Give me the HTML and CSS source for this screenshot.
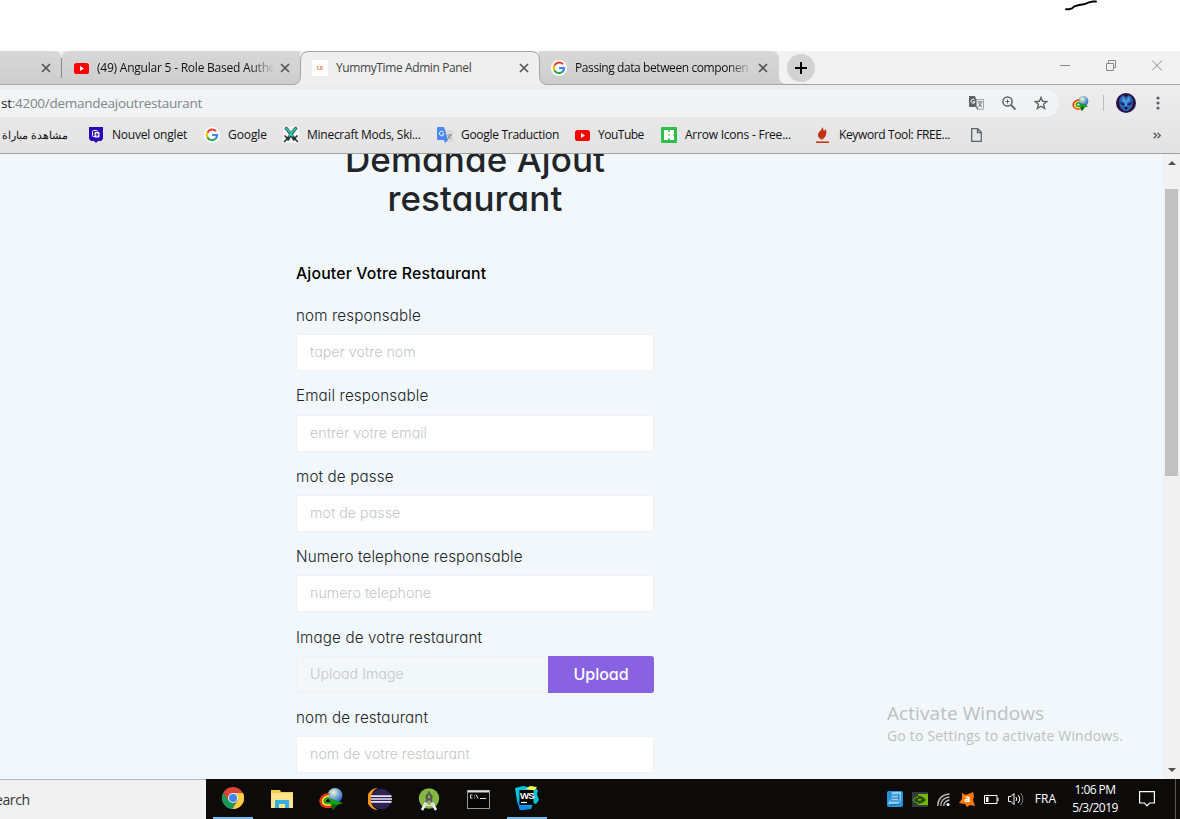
FILE: index.html
```html
<!DOCTYPE html>
<html lang="fr"><head><meta charset="utf-8"><title>YummyTime Admin Panel</title><link rel="stylesheet" href="styles.css"></head>
<body>
<svg width="0" height="0" class="defs"><defs>
<radialGradient id="gl" cx=".4" cy=".3" r=".75"><stop stop-color="#eef4c8"/><stop offset=".4" stop-color="#8fb8d8"/><stop offset="1" stop-color="#1d55b8"/></radialGradient>
<symbol id="x" viewBox="0 0 10 10"><path d="M1 1l8 8M9 1l-8 8" stroke="#555" stroke-width="1.7"/></symbol>
<symbol id="g" viewBox="0 0 16 16"><circle cx="8" cy="8" r="8" fill="#fff"/><g fill="none" stroke-width="2.2"><path d="M12 4.2A5.2 5.2 0 0 0 3.4 5.6" stroke="#ea4335"/><path d="M3.4 5.6a5.2 5.2 0 0 0 0 4.8" stroke="#fbbc05"/><path d="M3.4 10.4a5.2 5.2 0 0 0 8 1.4" stroke="#34a853"/><path d="M11.4 11.8A5 5 0 0 0 13.1 8H8" stroke="#4285f4"/></g></symbol>
<symbol id="yt" viewBox="0 0 15 11"><rect width="15" height="11" rx="2.6" fill="#f00"/><path d="M6 3v5l4-2.500z" fill="#fff"/></symbol>
<symbol id="idm" viewBox="0 0 24 22"><circle cx="16" cy="7.500" r="7.500" fill="url(#gl)"/><g fill="none" stroke-width="2.200"><path d="M10 6C4 6 .5 11 1.500 14.500S7 20 13 18.500" stroke="#e8301a"/><path d="M10 8C6 8 3 11.500 3.700 14S8 17.500 13 16.500" stroke="#ffd91f"/><path d="M10 10c-3 0-4.500 2-4 3.500s3 2 6 1" stroke="#25a33a"/></g><path d="M10 10l14 5-6 2-4 5-2-6-5-1.500 5-.5z" fill="#10a014"/><path d="M12 16l2 6 4-5z" fill="#0b5d10"/></symbol>
</defs></svg>
<header class="blank"><svg class="scribble" width="34" height="13"><path d="M2 9.200h3l3-.7 2-1.900L15 5l5-.7 5-2 4-.8h3" fill="none" stroke="#000" stroke-width="1.900" stroke-linecap="round"/></svg></header>
<nav class="tabs">
<svg class="tab-shapes" width="1180" height="34"><defs><linearGradient id="tg" x2="0" y2="1"><stop stop-color="#d8d8d8"/><stop offset="1" stop-color="#cdcdcd"/></linearGradient></defs>
<rect width="1180" height="34" fill="#f2f2f2"/>
<path d="M0 0H54q7 0 7.500 7Q62 0 69 0H300V34H0zM539 0H771q8 0 8 8V25q0 8 8 8v1H539z" fill="url(#tg)"/>
<path d="M61.500 7V27" stroke="#888"/><path d="M0 33.500H1180" stroke="#a4a4a4"/>
<path d="M292 34q8.500-.5 8.500-9V9q0-8.500 8.500-8.500H531q8.500 0 8.500 8.500V25q0 8.500 8.500 9z" fill="#efefef"/>
<path d="M292 33.500q8.500 0 8.500-8.500V9q0-8.500 8.500-8.500H531q8.500 0 8.500 8.500V25q0 8.500 8.500 8.500" fill="none" stroke="#a4a4a4"/></svg>
<div class="tab t1"><svg class="close"><use href="#x"/></svg></div>
<div class="tab t2"><svg width="15" height="11"><use href="#yt"/></svg><span class="title fade">(49) Angular 5 - Role Based Autho</span><svg class="close"><use href="#x"/></svg></div>
<div class="tab t3"><span class="fav">UI</span><span class="title act">YummyTime Admin Panel</span><svg class="close"><use href="#x"/></svg></div>
<div class="tab t4"><svg width="16" height="16"><use href="#g"/></svg><span class="title fade">Passing data between componen</span><svg class="close"><use href="#x"/></svg></div>
<div class="plus"><svg width="12" height="12"><path d="M6 0v12M0 6h12" stroke="#000" stroke-width="2"/></svg></div>
<div class="win"><svg width="102" height="11" fill="none" stroke="#888"><path d="M0 5.500H10M46.500 3.500h7v7h-7zM48.500 3V.5h7v7H54M92 .5l10 10M102 .5l-10 10"/></svg></div>
</nav>
<div class="chrome">
<div class="addr"><div class="omni"><span class="url"><b>st</b>:4200/demandeajoutrestaurant</span>
<div class="omni-ic">
<svg width="15" height="14"><path d="M0 0h6l1 3h7.500v10.500H8L7 11H1a1 1 0 0 1-1-1z" fill="#5f6368"/><path d="M7.500 3.500H14v9.500H9.500l-2-3z" fill="#e8eaec"/><path d="M5.500 3.800a2 2 0 1 0 .5 2H4" fill="none" stroke="#fff"/><path d="M8.500 6h5M11 5v1M9.500 11l3-4.500M9.500 7l3.500 4" fill="none" stroke="#777"/></svg>
<svg width="14" height="14" fill="none" stroke="#5f6368"><circle cx="5.500" cy="5.500" r="4.600" stroke-width="1.500"/><path d="M9 9l4.500 4.500" stroke-width="1.900"/><path d="M5.500 3.500v4M3.500 5.500h4"/></svg>
<svg width="14" height="14"><path d="M7 1.500l1.600 3.800 4.200.3-3.200 2.700 1 4.100L7 10.200l-3.600 2.200 1-4.100L1.200 5.600l4.200-.3z" fill="none" stroke="#5f6368" stroke-width="1.400"/></svg>
</div></div>
<svg class="idm" width="17" height="15"><use href="#idm"/></svg><i class="vsep"></i>
<svg class="avatar" width="20" height="20"><circle cx="10" cy="10" r="10" fill="#2a1040"/><path d="M6 2l4 2 4-2 3 5-1 7-4 4H8l-4-4-1-7z" fill="#2a62b4"/><path d="M7 3l3 5 3-5 1 5-3 2v3H9v-3L6 8z" fill="#4f9be0"/><path d="M4 9l5 2.500-3 .5zM16 9l-5 2.500 3 .5zM8 15l2-1 2 1-2 1.500z" fill="#100c38"/></svg>
<svg class="dots" width="4" height="14" fill="#5f6368"><circle cx="2" cy="2" r="1.600"/><circle cx="2" cy="7" r="1.600"/><circle cx="2" cy="12" r="1.600"/></svg></div>
<div class="marks">
<span class="bm b0"><span dir="rtl">مشاهدة مباراة</span></span>
<span class="bm b1"><svg width="14" height="16"><path d="M0 0h14v12l-2 2H9l-2 2-2-2H2l-2-2z" fill="#2a0ab4"/><rect x="3.500" y="3.500" width="5" height="6" rx="1" fill="none" stroke="#fff"/><rect x="5.500" y="5" width="5" height="5.500" rx="1" fill="#fff"/><path d="M8 6v3.500M6.500 7.800h3" stroke="#2a0ab4"/></svg><span>Nouvel onglet</span></span>
<span class="bm b2"><svg width="16" height="16"><use href="#g"/></svg><span>Google</span></span>
<span class="bm b3"><svg width="16" height="16"><rect width="16" height="16" fill="#f6f6f6"/><path d="M2 1l2 1 8 11M14 1l-2 1L4 13" fill="none" stroke="#25413c" stroke-width="3"/><path d="M2.500 1.500l2 1 5.500 7M13.500 1.500l-2 1-5.500 7" fill="none" stroke="#32cbb0" stroke-width="1.800"/><path d="M1.500 8.500l4.500 4.500M14.500 8.500L10 13M1 15l3-3M15 15l-3-3" stroke="#26322f" stroke-width="1.600"/></svg><span>Minecraft Mods, Ski...</span></span>
<span class="bm b4"><svg width="16" height="16"><path d="M6 3h10v12H9z" fill="#dadada"/><path d="M0 1q0-1 1-1h6l4 13H1q-1 0-1-1zM7 13h4l-3 3z" fill="#4a87ee"/><path d="M6.500 5A2.300 2.300 0 1 0 7 7H5" fill="none" stroke="#fff"/><path d="M10.500 8h4.500M13 7v1M11 12l3-4M11 9l3 3" fill="none" stroke="#888"/></svg><span>Google Traduction</span></span>
<span class="bm b5"><svg width="15" height="11"><use href="#yt"/></svg><span>YouTube</span></span>
<span class="bm b6"><svg width="16" height="16"><rect width="16" height="16" rx="1" fill="#2fc04b"/><path d="M3 3h4l1 1 1-1h4v4l-1 1 1 1v4H9l-1-1-1 1H3z" fill="#fff"/><path d="M8 3v2M8 7.300v1.400M8 11v2" stroke="#2fc04b" stroke-width="1.200"/></svg><span>Arrow Icons - Free...</span></span>
<span class="bm b7"><svg width="13" height="16"><path d="M6 0c2 2 1 3 2 4l2-2c1 5 0 8-4 11C1 10 1 7 4 4c1-1 2-2 2-4z" fill="#c4320c"/><path d="M5 12.500l1-2 .5 2z" fill="#e6b9ad"/><path d="M0 15.200h13" stroke="#c4320c" stroke-width="1.500"/></svg><span>Keyword Tool: FREE...</span></span>
<span class="bm b8"><svg width="11" height="14"><path d="M.7.700h6l3.600 3.600v9H.7zM6.500.700v4h4" fill="none" stroke="#5f6368" stroke-width="1.300"/></svg></span>
<svg class="more" width="8" height="7" fill="none" stroke="#5f6368" stroke-width="1.500"><path d="M.7.700l2.800 2.800L.7 6.300M4.500.700l2.800 2.800-2.800 2.800"/></svg>
</div></div>
<main class="view">
<div class="page"><div class="form">
<h1>Demande Ajout<br>restaurant</h1>
<h2>Ajouter Votre Restaurant</h2>
<div class="group"><label>nom responsable</label><div class="field">taper votre nom</div></div>
<div class="group"><label>Email responsable</label><div class="field">entrer votre email</div></div>
<div class="group"><label>mot de passe</label><div class="field">mot de passe</div></div>
<div class="group"><label>Numero telephone responsable</label><div class="field">numero telephone</div></div>
<div class="group"><label>Image de votre restaurant</label><div class="field off"><span>Upload Image</span><button class="up">Upload</button></div></div>
<div class="group"><label>nom de restaurant</label><div class="field">nom de votre restaurant</div></div>
</div></div>
<aside class="scroll"><i class="up-a"></i><i class="thumb"></i><i class="dn-a"></i></aside>
<div class="mark"><div class="m1">Activate Windows</div><div class="m2">Go to Settings to activate Windows.</div></div>
</main>
<footer class="task">
<div class="search">earch</div>
<div class="app on"><svg width="22" height="22"><circle cx="11" cy="11" r="11" fill="#db4437"/><path d="M1.500 5.500A11 11 0 0 0 10 22l5-8.500-8.500.5z" fill="#0f9d58"/><path d="M11 6H20.900A11 11 0 0 1 10.500 22L16 13z" fill="#ffcd40"/><circle cx="11" cy="11" r="5" fill="#f1f1f1"/><circle cx="11" cy="11" r="4" fill="#4285f4"/></svg></div>
<div class="app"><svg width="22" height="18"><path d="M0 0h9l1 2h12v16H0z" fill="#f6c94f"/><path d="M0 3h22v15H0z" fill="#ffe28c"/><path d="M4 18v-8h14v8h-4v-4H8v4z" fill="#35aee5"/></svg></div>
<div class="app"><svg width="24" height="22"><use href="#idm"/></svg></div>
<div class="app"><svg width="24" height="22"><path d="M10 0A11 11 0 0 0 10 22 12 12 0 0 1 10 0z" fill="#f7941e"/><circle cx="13.500" cy="11" r="10.300" fill="#2c2255"/><path d="M3 8.200h20.500M3 11h21M3 13.800h20.500" stroke="#e8e6f2" stroke-width="1.700"/></svg></div>
<div class="app"><svg width="22" height="23"><circle cx="11" cy="10.500" r="10.200" fill="#84b840"/><path d="M9.500 12L4 22M12.500 12L18 22" stroke="#eee" stroke-width="2.600"/><path d="M5.500 16q5.500 3 11 0" fill="none" stroke="#ddd" stroke-width="1.500"/><circle cx="11" cy="9" r="2.500" fill="#84b840" stroke="#555" stroke-width="2.200"/><path d="M11 3.500v3M9.500 11.500l-1.500 3M12.500 11.500l1.500 3" stroke="#606060" stroke-width="2.400"/></svg></div>
<div class="app"><svg width="23" height="19"><rect x=".5" y=".5" width="22" height="18" fill="#050505" stroke="#999"/><path d="M1 1.500h21" stroke="#ddd" stroke-width="2"/><path d="M5.500 5H3.500v3h2M7.500 5.500v.8M7.500 7.500v.8M9 4.500l2 4M13 8.500h6" fill="none" stroke="#ddd"/></svg></div>
<div class="app on"><svg width="24" height="24"><path d="M0 2l8-2 5 1 4-1 6 4-1 4 2 6-3 4-3-1-2 6-11 1-2-7L2 15z" fill="#07c3d8"/><path d="M11 3l4-3 7 1-3 4z" fill="#fcf84a"/><path d="M2 16l3-1 1 4 10 1-1 3-10 1z" fill="#0a8cf0"/><path d="M4.500 4h14v15h-14z" fill="#000"/><text x="5" y="13" class="ws">WS</text><path d="M6 16.500h6" stroke="#fff" stroke-width="1.300"/></svg></div>
<div class="tray">
<svg width="16" height="16"><rect width="16" height="16" rx="2" fill="#2395dd"/><path d="M5 1h9v8l-2 4H1l2-4z" fill="#8fcef4"/><path d="M5 4h7M5 7h7M4 10h9M3 14l10-1M4 3v7M12 3v6" stroke="#176eb5"/></svg>
<svg width="16" height="15"><rect width="16" height="15" fill="#333b42"/><path d="M6 2h10v11H6z" fill="#76b900"/><path d="M1 8q6-7 12 0-6 6-12 0M4 8q4-4 7 0-4 3-7 0" fill="none" stroke="#284a08" stroke-width="1.300"/><path d="M1 8q2-3 5-3.300M1 8q2 3 5 3.300" stroke="#76b900" fill="none"/></svg>
<svg width="13" height="13" fill="none" stroke="#bbb" stroke-width="1.300"><path d="M.7 13Q1 2 12.500 1M3.700 13Q4 5 12.500 4M6.700 13Q7 8 12.500 7"/><circle cx="11" cy="11.500" r="1.500" fill="#fff" stroke="none"/></svg>
<svg width="16" height="15"><path d="M3 1l4 2 7-3 1 4-1 4 2 6-5-1-3 2-2-3-6-1 3-4z" fill="#ff7800"/><path d="M6.500 5.500q3-1 3.500.500v4M10 7.500q-4-.5-4 1t4 .5" fill="none" stroke="#fff" stroke-width="1.300"/></svg>
<svg width="15" height="9"><path d="M.5.500h12.500v8H.5zM14 3v3" fill="none" stroke="#fff"/><path d="M2 2h2.500v5H2z" fill="#fff"/></svg>
<svg width="16" height="14" fill="none" stroke="#fff"><path d="M.5 4.500h2.500l3-3v11l-3-3H.5zM8 5q1.500 2 0 4M10 3q3.500 4 0 8"/><path d="M12.500 1q5 6 0 12" stroke="#777"/></svg>
<span class="lang">FRA</span>
<div class="clock"><span>1:06 PM</span><span>5/3/2019</span></div>
<svg width="16" height="16"><path d="M.6.600h14.800v11.400H10.500L8 14.800 5.500 12H.6z" fill="none" stroke="#fff" stroke-width="1.200"/></svg>
</div></footer>
</body></html>
```
FILE: styles.css
```css
*{box-sizing:border-box}
body{margin:0;width:1180px;height:819px;overflow:hidden;background:#fff;display:flex;flex-direction:column;font:12px/16px "Open Sans","Noto Sans",sans-serif;letter-spacing:-.26px;color:#111}
svg{display:block;flex:none}
.defs{position:absolute}
span{white-space:nowrap}
.blank{height:51px;display:flex;justify-content:flex-end;padding-right:82px}
.tabs{height:34px;position:relative;display:flex;align-items:center}
.tab-shapes{position:absolute;left:0;top:0}
.tab{position:relative;display:flex;align-items:center;height:34px}
.close{width:10px;height:10px;margin-left:auto}
.t1{width:62px;padding-right:11px}
.t2{width:239px;padding:0 11px 0 12px;letter-spacing:-.22px}
.t3{width:238px;padding:0 10px 0 11px;letter-spacing:-.39px}
.t4{width:240px;padding:0 11px 0 12px;letter-spacing:-.41px}
.title{width:176px;margin-left:8px;overflow:hidden}
.fade{-webkit-mask-image:linear-gradient(90deg,#000 152px,transparent 178px)}
.act{color:#444}
.fav{width:16px;height:16px;background:#fff;color:#f06c35;font:bold 6px/17px "Liberation Sans",sans-serif;letter-spacing:0;text-align:center}
.plus{position:relative;margin-left:8px;width:28px;height:28px;border-radius:50%;background:#d2d2d2;display:flex;align-items:center;justify-content:center}
.win{position:relative;margin-left:auto;padding:0 18px 5px 0}
.chrome{height:69px;background:linear-gradient(#ededed,#e3e3e3);border-bottom:1px solid #a0a0a0}
.addr{height:33px;display:flex;align-items:center;padding-top:3px}
.omni{width:1059px;height:28px;background:#f1f3f4;border-radius:0 14px 14px 0;display:flex;align-items:center;justify-content:space-between;padding:0 11px 0 1px}
.url{font-size:13.5px;letter-spacing:-.265px;color:#80868b}
.url b{font-weight:400;color:#222}
.omni-ic{display:flex;gap:18px;align-items:center}
.idm{margin-left:13px}
.vsep{width:1px;height:16px;background:#bbb;margin-left:14px}
.avatar{margin-left:12px}
.dots{margin-left:20px}
.marks{height:34px;display:flex;align-items:center}
.bm{display:flex;align-items:center;gap:8px}
.b0{width:89px;padding-left:2px;font-size:11.2px;letter-spacing:0}
.b1{width:115px;gap:9px;letter-spacing:-.2px}
.b2{width:79px;letter-spacing:-.08px}
.b3{width:154px}
.b4{width:138px;letter-spacing:-.3px}
.b5{width:86px;letter-spacing:-.5px}
.b6{width:155px;letter-spacing:-.22px}
.b7{width:155px;gap:10px;letter-spacing:-.37px}
.more{margin-left:auto;margin-right:19px}
.view{height:625px;position:relative;display:flex;background:#f1f7fa;overflow:hidden}
.page{flex:1;padding-left:296px;overflow:hidden;font-family:Inter,sans-serif;font-feature-settings:"cv11"}
.form{width:358px;display:flex;flex-direction:column}
h1{margin:-14px 0 0;font-size:35px;line-height:38.5px;font-weight:450;letter-spacing:.1px;text-align:center;color:#212529}
h2{margin:45px 0 17px;font-size:15.8px;line-height:24px;font-weight:450;letter-spacing:.16px;color:#000}
.group{height:80.4px;flex:none}
label{display:block;font-size:15.2px;line-height:25px;height:31.3px;font-weight:300;letter-spacing:.13px;color:#212529}
.field{height:37px;background:#fff;border:1px solid #eff1f2;border-radius:2px;padding:0 0 1px 13px;display:flex;align-items:center;justify-content:space-between;font-size:14.2px;font-weight:300;letter-spacing:.05px;color:#c4c6c8}
.off{background:#f2f7f9;padding-bottom:0}
.up{width:106px;height:37px;margin-right:-1px;border:0;border-radius:0 3px 3px 0;background:#8862e0;color:#fff;font:500 16px Inter,sans-serif;font-feature-settings:"cv11";padding:0}
.scroll{width:17px;background:#f1f1f1;display:flex;flex-direction:column;align-items:center}
.up-a{border:4px solid transparent;border-top:0;border-bottom:4px solid #505050;margin:7px 0 24px}
.thumb{width:13px;height:287px;background:#c1c1c1}
.dn-a{border:4px solid transparent;border-bottom:0;border-top:4px solid #505050;margin-top:auto;margin-bottom:7px}
.mark{position:absolute;left:887px;top:547px;color:#bcc0c1}
.m1{font-size:19px;line-height:25px;letter-spacing:.07px}
.m2{font-size:14px;line-height:20px;letter-spacing:.19px}
.task{height:40px;background:#0d0b0a;display:flex;align-items:center}
.search{width:206px;height:40px;background:#f1f1f1;border-top:1px solid #b5b5b5;font-size:14px;line-height:39px;letter-spacing:-.4px;text-indent:-5px;color:#333}
.app{width:40px;height:40px;margin-left:9px;display:flex;align-items:center;justify-content:center}
.on{border-bottom:2px solid #76b9ed}
.search+.app{margin-left:7px}
.ws{font:bold 9.5px "Liberation Sans",sans-serif;letter-spacing:-.8px;fill:#fff}
.tray{margin-left:auto;height:40px;display:flex;align-items:center;gap:9px;color:#fff;border-right:1px solid #555;padding-right:20px;margin-right:4px}
.lang{margin-left:2px;letter-spacing:0}
.clock{width:60px;margin:0 5px 0 0;display:flex;flex-direction:column;align-items:center;line-height:18px;letter-spacing:-.55px}
```
